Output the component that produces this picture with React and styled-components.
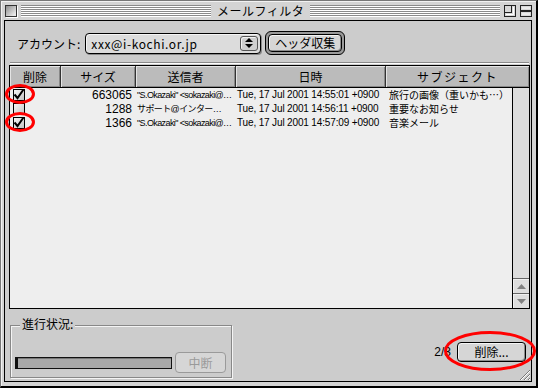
import React from 'react';
import styled, { createGlobalStyle } from 'styled-components';

const JP = `"Noto Sans CJK JP", "Liberation Sans", sans-serif`;
const LAT = `"Liberation Sans", "Noto Sans CJK JP", sans-serif`;

const Global = createGlobalStyle`
  html, body { margin: 0; padding: 0; background: #ffffff; }
  body { font-family: ${JP}; }
  * { box-sizing: border-box; }
`;

const Window = styled.div`
  position: relative;
  width: 538px;
  height: 388px;
  background: #d4d4d4;
  border-left: 1px solid #777;
  border-top: 1px solid #777;
  border-right: 2px solid #000;
  border-bottom: 2px solid #000;
  box-shadow: inset 1px 1px 0 #f2f2f2;
  display: flex;
  flex-direction: column;
  font-family: ${JP};
  color: #000;
`;

const TitleBar = styled.div`
  height: 19px;
  display: flex;
  align-items: center;
  padding: 0 4px;
  gap: 4px;
`;

const CloseBox = styled.div`
  width: 12px;
  height: 12px;
  border: 1px solid #333;
  background: linear-gradient(135deg, #8c8c8c 0%, #e8e8e8 85%);
  box-shadow: 1px 1px 0 #fff;
`;

const Stripes = styled.div`
  flex: 1;
  height: 12px;
  background: repeating-linear-gradient(to bottom, #8a8a8a 0 1px, #ffffff 1px 2px);
`;

const Title = styled.div`
  font-size: 12px;
  line-height: 14px;
  padding: 0 2px;
  letter-spacing: 0.5px;
`;

const BoxIcon = styled.svg`
  width: 12px;
  height: 12px;
  display: block;
`;

const Panel = styled.div`
  position: relative;
  flex: 1;
  margin: 0 4px 4px 3px;
  border: 1px solid #000;
  background: #cccccc;
  display: flex;
  flex-direction: column;
`;

const AccountRow = styled.div`
  display: flex;
  align-items: center;
  height: 24px;
  margin-top: 10px;
  padding-left: 12px;
`;

const Label = styled.span`
  font-size: 12px;
  margin-right: 5px;
  white-space: nowrap;
`;

const Popup = styled.div`
  width: 176px;
  height: 21px;
  border: 1px solid #000;
  border-radius: 4px;
  background: #dcdcdc;
  box-shadow: inset 1px 1px 0 #f4f4f4, 1px 1px 0 #8a8a8a;
  display: flex;
  align-items: center;
  justify-content: space-between;
  padding: 0 2px 0 5px;
  font-size: 12px;
  letter-spacing: 0.6px;
`;

const PopupArrow = styled.div`
  width: 18px;
  height: 15px;
  border: 1px solid #555;
  border-radius: 3px;
  background: #cfcfcf;
  box-shadow: inset 1px 1px 0 #f2f2f2;
  display: flex;
  align-items: center;
  justify-content: center;
`;

const DefaultRing = styled.div`
  margin-left: 4px;
  height: 24px;
  border: 1px solid #000;
  border-radius: 6px;
  background: #9a9a9a;
  padding: 2px;
  display: flex;
`;

const Button = styled.button`
  font-family: ${JP};
  font-size: 12px;
  color: ${(p) => (p.disabled ? '#9a9a9a' : '#000')};
  width: ${(p) => p.w}px;
  height: ${(p) => p.h}px;
  padding: 0;
  border: 1px solid ${(p) => (p.disabled ? '#9a9a9a' : '#000')};
  border-radius: 4px;
  background: #d6d6d6;
  box-shadow: ${(p) =>
    p.disabled ? 'none' : 'inset 1px 1px 0 #f4f4f4, inset -1px -1px 0 #8c8c8c'};
  display: flex;
  align-items: center;
  justify-content: center;
  line-height: 1;
`;

const Separator = styled.div`
  height: 2px;
  margin: 7px 2px 0 5px;
  border-top: 1px solid #8a8a8a;
  border-bottom: 1px solid #ffffff;
`;

const ListBox = styled.div`
  margin: 1px 1px 0 4px;
  height: 244px;
  border: 1px solid #000;
  background: #eeeeee;
  display: flex;
  flex-direction: column;
`;

const cols = '51px 75px 100px 150px 1fr';

const Header = styled.div`
  display: grid;
  grid-template-columns: ${cols};
  height: 22px;
  border-bottom: 1px solid #000;
`;

const HeaderCell = styled.div`
  background: #bbbbbb;
  border-right: ${(p) => (p.last ? 'none' : '1px solid #333')};
  box-shadow: inset 1px 1px 0 #e4e4e4, inset -1px -1px 0 #888;
  font-size: 12px;
  display: flex;
  align-items: center;
  justify-content: center;
  letter-spacing: ${(p) => (p.wide ? '1.5px' : '0')};
`;

const Body = styled.div`
  flex: 1;
  display: flex;
  min-height: 0;
`;

const Rows = styled.div`
  flex: 1;
  display: flex;
  flex-direction: column;
`;

const Row = styled.div`
  display: grid;
  grid-template-columns: ${cols};
  height: 14px;
  align-items: center;
`;

const CheckCell = styled.div`
  padding-left: 3px;
  display: flex;
  align-items: center;
`;

const CheckBox = styled.span`
  width: 12px;
  height: 12px;
  border: 1px solid #000;
  background: linear-gradient(135deg, #f6f6f6, #c4c4c4);
  display: flex;
  align-items: center;
  justify-content: center;
  overflow: visible;
`;

const SizeCell = styled.div`
  font-family: ${LAT};
  font-size: 12px;
  text-align: right;
  padding-right: 4px;
  line-height: 14px;
`;

const TextCell = styled.div`
  min-width: 0;
  overflow: ${(p) => (p.clip ? 'hidden' : 'visible')};
  white-space: nowrap;
  font-family: ${(p) => (p.jp ? JP : LAT)};
  font-size: ${(p) => p.size}px;
  padding-left: ${(p) => p.pl}px;
  letter-spacing: ${(p) => p.ls || 0}px;
  line-height: 14px;
`;

const ScrollBar = styled.div`
  width: 17px;
  border-left: 1px solid #000;
  background: #dddddd;
  display: flex;
  flex-direction: column;
  justify-content: flex-end;
`;

const ScrollArrow = styled.div`
  height: 15px;
  border-top: 1px solid #666;
  display: flex;
  align-items: center;
  justify-content: center;
  box-shadow: inset 1px 1px 0 #f0f0f0;
`;

const Bottom = styled.div`
  flex: 1;
  display: flex;
  align-items: flex-start;
`;

const GroupBox = styled.div`
  position: relative;
  margin: 16px 0 0 5px;
  width: 222px;
  height: 53px;
  border: 1px solid #888;
  box-shadow: inset 1px 1px 0 #f4f4f4, 1px 1px 0 #f4f4f4;
  display: flex;
  flex-direction: column;
  justify-content: flex-end;
  padding: 0 4px 4px 4px;
`;

const GroupLabel = styled.span`
  position: absolute;
  left: 9px;
  top: -10px;
  padding: 0 2px;
  background: #cccccc;
  font-size: 12px;
  line-height: 16px;
`;

const ProgressRow = styled.div`
  display: flex;
  align-items: center;
  gap: 3px;
`;

const Progress = styled.div`
  width: 157px;
  height: 12px;
  border: 1px solid #111;
  border-left: 3px solid #111;
  background: #a9a9a9;
  box-shadow: inset 0 1px 0 #777;
`;

const RightGroup = styled.div`
  margin: 33px 5px 0 auto;
  display: flex;
  align-items: center;
  gap: 6px;
`;

const Count = styled.span`
  font-family: ${LAT};
  font-size: 12px;
`;

const Grip = styled.svg`
  position: absolute;
  right: 0;
  bottom: 0;
  width: 13px;
  height: 13px;
`;

const Mark = styled.svg`
  position: absolute;
  left: ${(p) => p.x}px;
  top: ${(p) => p.y}px;
  width: ${(p) => p.w}px;
  height: ${(p) => p.h}px;
  pointer-events: none;
  overflow: visible;
`;

const Check = () => (
  <svg width="12" height="12" viewBox="0 0 12 12" style={{ overflow: 'visible' }}>
    <path d="M1.5 5.5 L4.5 9 L10.5 0.5" fill="none" stroke="#000" strokeWidth="2" />
  </svg>
);

const Ellipse = ({ x, y, w, h }) => (
  <Mark x={x} y={y} w={w} h={h} viewBox={`0 0 ${w} ${h}`}>
    <ellipse
      cx={w / 2}
      cy={h / 2}
      rx={w / 2 - 1.5}
      ry={h / 2 - 1.5}
      fill="none"
      stroke="#ff0000"
      strokeWidth="3"
    />
  </Mark>
);

const rows = [
  {
    checked: true,
    size: '663065',
    from: '"S.Okazaki" <sokazaki@…',
    date: 'Tue, 17 Jul 2001 14:55:01 +0900',
    subject: '旅行の画像（重いかも…）',
  },
  {
    checked: false,
    size: '1288',
    from: 'サポート@インター…',
    date: 'Tue, 17 Jul 2001 14:56:11 +0900',
    subject: '重要なお知らせ',
  },
  {
    checked: true,
    size: '1366',
    from: '"S.Okazaki" <sokazaki@…',
    date: 'Tue, 17 Jul 2001 14:57:09 +0900',
    subject: '音楽メール',
  },
];

export default function App() {
  return (
    <>
      <Global />
      <Window>
        <TitleBar>
          <CloseBox />
          <Stripes />
          <Title>メールフィルタ</Title>
          <Stripes />
          <BoxIcon viewBox="0 0 12 12">
            <rect x="0.5" y="0.5" width="11" height="11" fill="#d8d8d8" stroke="#222" />
            <rect x="0.5" y="0.5" width="7" height="7" fill="none" stroke="#222" />
            <path d="M2 9.5 H9.5 V2" fill="none" stroke="#fff" />
          </BoxIcon>
          <BoxIcon viewBox="0 0 12 12">
            <rect x="0.5" y="0.5" width="11" height="11" fill="#d8d8d8" stroke="#222" />
            <path d="M0.5 5.5 H11.5 M0.5 6.5 H11.5" stroke="#222" />
            <path d="M2 3 H10 M2 9 H10" stroke="#fff" />
          </BoxIcon>
        </TitleBar>
        <Panel>
          <AccountRow>
            <Label>アカウント:</Label>
            <Popup>
              <span>xxx@i-kochi.or.jp</span>
              <PopupArrow>
                <svg width="8" height="10" viewBox="0 0 8 10">
                  <polygon points="0,4 4,0 8,4" fill="#000" />
                  <polygon points="0,6 4,10 8,6" fill="#000" />
                </svg>
              </PopupArrow>
            </Popup>
            <DefaultRing>
              <Button w={74} h={18}>ヘッダ収集</Button>
            </DefaultRing>
          </AccountRow>
          <Separator />
          <ListBox>
            <Header>
              <HeaderCell>削除</HeaderCell>
              <HeaderCell>サイズ</HeaderCell>
              <HeaderCell>送信者</HeaderCell>
              <HeaderCell>日時</HeaderCell>
              <HeaderCell last wide>サブジェクト</HeaderCell>
            </Header>
            <Body>
              <Rows>
                {rows.map((r, i) => (
                  <Row key={i}>
                    <CheckCell>
                      <CheckBox>{r.checked && <Check />}</CheckBox>
                    </CheckCell>
                    <SizeCell>{r.size}</SizeCell>
                    <TextCell clip size={9} pl={1} ls={-0.6}>{r.from}</TextCell>
                    <TextCell clip size={10} pl={1} ls={-0.15}>{r.date}</TextCell>
                    <TextCell jp size={10} pl={3}>{r.subject}</TextCell>
                  </Row>
                ))}
              </Rows>
              <ScrollBar>
                <ScrollArrow>
                  <svg width="9" height="5" viewBox="0 0 9 5">
                    <polygon points="0,5 4.5,0 9,5" fill="#808080" />
                  </svg>
                </ScrollArrow>
                <ScrollArrow>
                  <svg width="9" height="5" viewBox="0 0 9 5">
                    <polygon points="0,0 4.5,5 9,0" fill="#808080" />
                  </svg>
                </ScrollArrow>
              </ScrollBar>
            </Body>
          </ListBox>
          <Bottom>
            <GroupBox>
              <GroupLabel>進行状況:</GroupLabel>
              <ProgressRow>
                <Progress />
                <Button w={51} h={21} disabled>中断</Button>
              </ProgressRow>
            </GroupBox>
            <RightGroup>
              <Count>2/3</Count>
              <Button w={69} h={20}>削除...</Button>
            </RightGroup>
          </Bottom>
          <Grip viewBox="0 0 13 13">
            <path d="M2 12 L12 2 M6 12 L12 6 M10 12 L12 10" stroke="#777" strokeWidth="1" />
            <path d="M3 12 L12 3 M7 12 L12 7 M11 12 L12 11" stroke="#fff" strokeWidth="1" />
          </Grip>
        </Panel>
        <Ellipse x={4} y={83} w={30} h={20} />
        <Ellipse x={4} y={111} w={30} h={20} />
        <Ellipse x={443} y={330} w={92} h={40} />
      </Window>
    </>
  );
}
